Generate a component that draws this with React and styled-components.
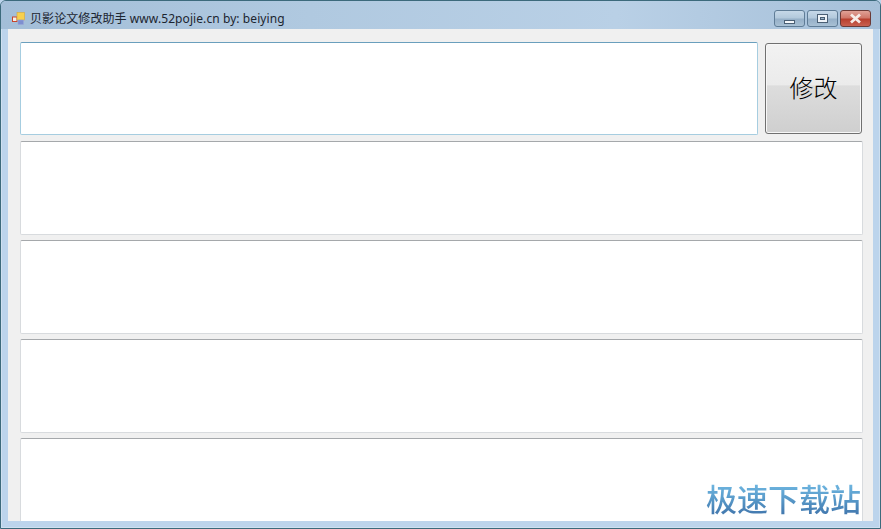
import styled, { createGlobalStyle } from "styled-components";

const GlobalStyle = createGlobalStyle`
  html, body {
    margin: 0;
    padding: 0;
    overflow: hidden;
    background: #bcd4ec;
  }
`;

const Window = styled.div`
  position: relative;
  width: 881px;
  height: 529px;
  box-sizing: border-box;
  display: flex;
  flex-direction: column;
  overflow: hidden;
  background: #bcd4ec;
  border: 1px solid #3c6a7c;
  border-top-left-radius: 6px;
  border-top-right-radius: 6px;
  box-shadow: inset 0 0 0 1px #cfe0f0;
  font-family: "Noto Sans", "Noto Sans CJK SC", sans-serif;
`;

const TitleBar = styled.div`
  height: 28px;
  box-sizing: border-box;
  flex-shrink: 0;
  display: flex;
  align-items: center;
  padding: 7px 9px 0 11px;
  background: linear-gradient(90deg, #a3bed8 0%, #b0c9e0 35%, #b9d0e6 70%, #a6c0d9 100%);
`;

const AppIcon = styled.svg`
  width: 13px;
  height: 13px;
  margin-right: 5px;
  flex-shrink: 0;
`;

const Title = styled.span`
  flex: 1;
  font-size: 12px;
  line-height: 16px;
  letter-spacing: 0.08px;
  color: #1c2530;
  white-space: nowrap;
`;

const Controls = styled.div`
  display: flex;
  gap: 2px;
`;

const ControlButton = styled.div`
  width: 31px;
  height: 17px;
  box-sizing: border-box;
  display: flex;
  align-items: center;
  justify-content: center;
  border: 1px solid ${(p) => (p.$close ? "#6b3a36" : "#5f7c96")};
  border-radius: 3px;
  background: ${(p) =>
    p.$close
      ? "linear-gradient(180deg, #e0a196 0%, #d0786a 45%, #b8402f 55%, #c8604f 100%)"
      : "linear-gradient(180deg, #c6d8e8 0%, #b3c9dc 45%, #96b0c8 55%, #a8c0d4 100%)"};
`;

const MinGlyph = styled.div`
  width: 11px;
  height: 4px;
  margin-top: 6px;
  box-sizing: border-box;
  background: #f4f7fa;
  border: 1px solid #4a5f74;
`;

const MaxGlyph = styled.div`
  width: 11px;
  height: 9px;
  box-sizing: border-box;
  background: #eef3f8;
  border: 1px solid #4a5f74;
  display: flex;
  align-items: center;
  justify-content: center;
  &::after {
    content: "";
    width: 5px;
    height: 3px;
    background: #9db4c9;
    border: 1px solid #4a5f74;
    box-sizing: border-box;
  }
`;

const Frame = styled.div`
  flex: 1;
  min-height: 0;
  display: flex;
  padding: 0 7px 7px;
`;

const Client = styled.div`
  flex: 1;
  min-width: 0;
  box-sizing: border-box;
  overflow: hidden;
  background: #f0f0f0;
  padding: 13px 10px 0 12px;
  display: flex;
  flex-direction: column;
  gap: 5px;
`;

const TopRow = styled.div`
  display: flex;
  gap: 7px;
  flex-shrink: 0;
  margin: 0 1px 1px 0;
`;

const TextBox = styled.div`
  box-sizing: border-box;
  height: ${(p) => (p.$focused ? "93px" : "94px")};
  flex: ${(p) => (p.$focused ? 1 : "none")};
  flex-shrink: 0;
  background: #fff;
  border: 1px solid ${(p) => (p.$focused ? "#a6cde0" : "#d8dbde")};
  border-top-color: ${(p) => (p.$focused ? "#6a9fbd" : "#a5a8ab")};
  border-radius: 2px;
`;

const FixButton = styled.button`
  width: 97px;
  height: 91px;
  margin-top: 1px;
  flex-shrink: 0;
  padding: 0 0 4px;
  border: 1px solid #707070;
  border-radius: 3px;
  background: linear-gradient(180deg, #f2f2f2 0%, #ebebeb 46%, #dddddd 47%, #cfcfcf 100%);
  box-shadow: inset 0 0 0 1px #f7f7f7;
  font-family: "Noto Sans CJK SC", sans-serif;
  font-size: 24px;
  font-weight: 300;
  color: #000;
`;

const Watermark = styled.div`
  position: absolute;
  right: 19px;
  bottom: 12px;
  font-family: "Noto Sans CJK SC", sans-serif;
  font-size: 31px;
  font-weight: 500;
  line-height: 36px;
  color: transparent;
  background: linear-gradient(180deg, #74bde6 0%, #5a9ccb 50%, #3f74ab 100%);
  -webkit-background-clip: text;
  background-clip: text;
`;

export default function App() {
  return (
    <>
      <GlobalStyle />
      <Window>
        <TitleBar>
          <AppIcon viewBox="0 0 13 13">
            <rect x="0.5" y="5" width="4.5" height="4.5" fill="#f4f0e8" stroke="#c8452c" />
            <rect x="5" y="0.5" width="7.5" height="7.5" fill="#f7d04e" stroke="#d8a838" strokeWidth="0.6" />
            <rect x="6" y="8" width="5.5" height="4.5" fill="#7e8fd0" stroke="#9aa6d8" strokeWidth="0.6" />
          </AppIcon>
          <Title>贝影论文修改助手 www.52pojie.cn by: beiying</Title>
          <Controls>
            <ControlButton>
              <MinGlyph />
            </ControlButton>
            <ControlButton>
              <MaxGlyph />
            </ControlButton>
            <ControlButton $close>
              <svg width="13" height="11" viewBox="0 0 13 11">
                <path d="M2 1.5 L11 9.5 M11 1.5 L2 9.5" stroke="#f6ece8" strokeWidth="2.8" />
              </svg>
            </ControlButton>
          </Controls>
        </TitleBar>
        <Frame>
          <Client>
            <TopRow>
              <TextBox $focused />
              <FixButton>修改</FixButton>
            </TopRow>
            <TextBox />
            <TextBox />
            <TextBox />
            <TextBox />
          </Client>
        </Frame>
        <Watermark>极速下载站</Watermark>
      </Window>
    </>
  );
}
